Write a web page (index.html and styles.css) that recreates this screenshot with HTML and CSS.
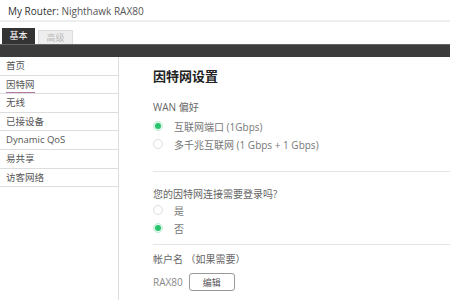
FILE: index.html
```html
<!DOCTYPE html>
<html>
<head>
    <title>Router Settings</title>
    <link rel="stylesheet" href="styles.css">
</head>
<body>
    <div class="header">My Router: <span class="model">Nighthawk RAX80</span></div>
    <div class="tabs">
        <div class="tab active">基本</div>
        <div class="tab">高级</div>
    </div>
    <div class="bar"></div>
    <div class="main">
        <ul class="sidebar">
            <li>首页</li>
            <li class="current"><span>因特网</span></li>
            <li>无线</li>
            <li>已接设备</li>
            <li>Dynamic QoS</li>
            <li>易共享</li>
            <li>访客网络</li>
        </ul>
        <div class="content">
            <h2>因特网设置</h2>
            <div class="section wan">
                <div class="label">WAN 偏好</div>
                <div class="option"><span class="radio checked"></span>互联网端口 (1Gbps)</div>
                <div class="option"><span class="radio"></span>多千兆互联网 (1 Gbps + 1 Gbps)</div>
            </div>
            <div class="section login">
                <div class="label">您的因特网连接需要登录吗?</div>
                <div class="option"><span class="radio"></span>是</div>
                <div class="option"><span class="radio checked"></span>否</div>
            </div>
            <div class="section last">
                <div class="label">帐户名 （如果需要）</div>
                <div class="account">RAX80 <button class="edit">编辑</button></div>
            </div>
        </div>
    </div>
</body>
</html>
```

FILE: styles.css
```css
body { margin: 0; font-family: "Open Sans", "Noto Sans CJK SC", sans-serif; color: #666; background: #fff; overflow: hidden; }
.header { height: 20px; line-height: 22px; padding-left: 8px; font-size: 10px; color: #333; border-bottom: 2px solid #eee; }
.header .model { color: #555; }
.tabs { display: flex; align-items: flex-end; gap: 3px; height: 22px; padding-left: 2px; }
.tab { width: 33px; height: 13px; line-height: 13px; text-align: center; font-size: 9px; color: #bbb; background: #eee; border: 1px solid #ddd; border-bottom: none; }
.tab.active { width: 33px; height: 16px; line-height: 16px; color: #fff; background: #333; border: none; }
.bar { height: 12px; background: #3b3b3b; border-top: 1px solid #666; }
.main { display: flex; height: 243px; }
.sidebar { list-style: none; margin: 0; padding: 0; width: 118px; border-right: 1px solid #ddd; }
.sidebar li { height: 17.6px; line-height: 18px; padding-left: 6px; font-size: 9.5px; color: #555; border-bottom: 1px solid #ddd; }
.sidebar li.current span { border-bottom: 1px solid #b07aa1; padding-bottom: 1px; }
.content { flex: 1; padding-left: 34px; }
h2 { margin: 11px 0 0; font-size: 13px; color: #222; font-weight: bold; line-height: 16px; }
.section { border-bottom: 1px solid #e5e5e5; }
.section.wan { padding: 16px 0 18px; }
.section.login { padding: 15px 0 7px; }
.section.last { border-bottom: none; padding-top: 7px; }
.label { font-size: 10px; line-height: 14px; color: #666; margin-bottom: 3px; }
.login .label { margin-bottom: 0; }
.option { display: flex; align-items: center; height: 18px; font-size: 10px; color: #777; }
.radio { width: 10px; height: 10px; border: 1px solid #ddd; border-radius: 50%; margin: 0 11px 0 0; box-sizing: border-box; position: relative; }
.radio.checked { border-color: #bfeed3; background: #e9faf0; }
.radio.checked::after { content: ""; position: absolute; left: 1px; top: 1px; width: 6px; height: 6px; border-radius: 50%; background: #27c46b; }
.account { display: flex; align-items: center; gap: 6px; font-size: 10px; color: #888; margin-top: 7px; }
.edit { width: 46px; height: 18px; padding: 0; font-family: inherit; font-size: 9px; color: #555; background: #fff; border: 1px solid #999; border-radius: 3px; }
```
